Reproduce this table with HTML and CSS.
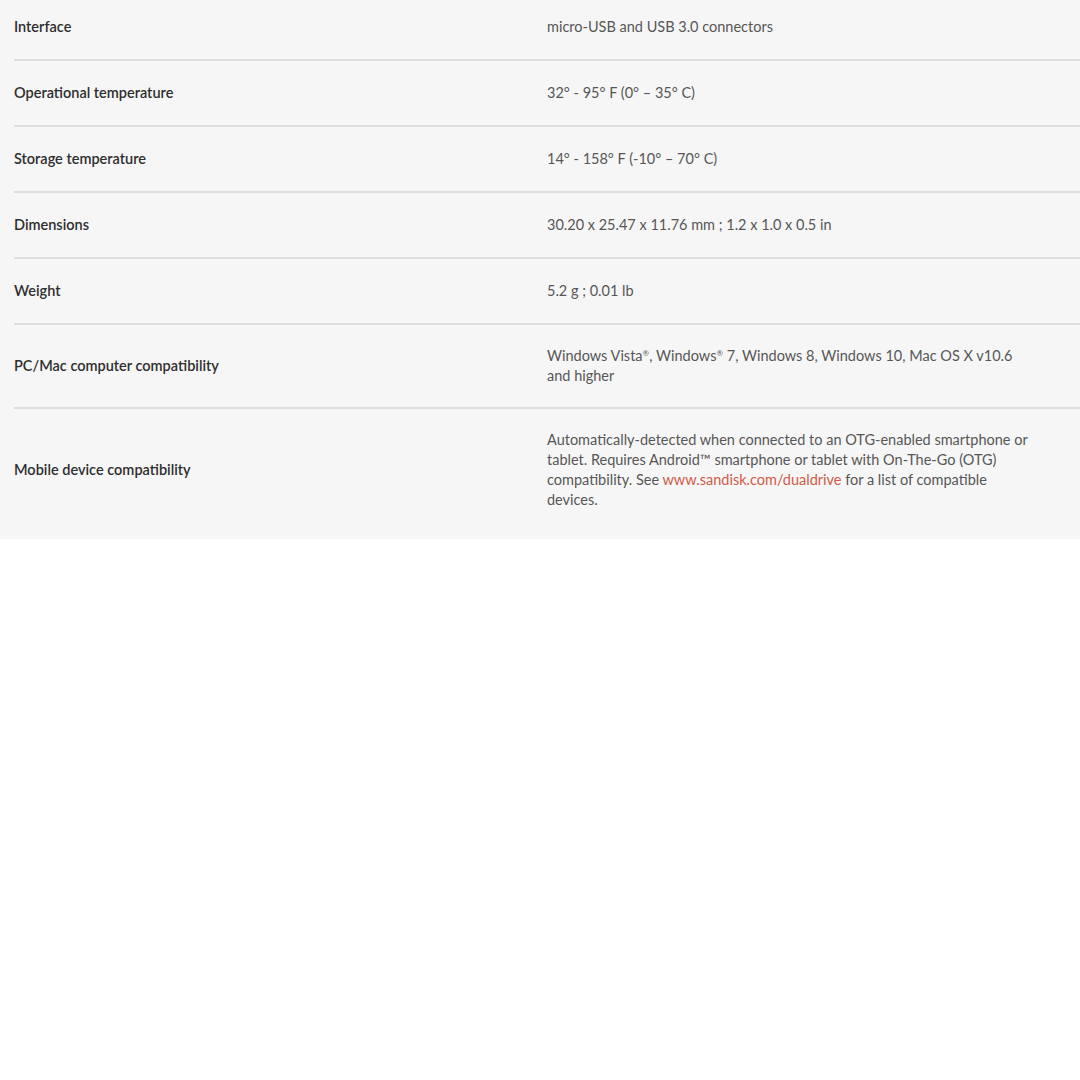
FILE: index.html
```html
<!DOCTYPE html>
<html lang="en">
<head>
<meta charset="utf-8">
<title>Specifications</title>
<link rel="stylesheet" href="styles.css">
</head>
<body>
<section class="specs">
  <div class="spec-row">
    <div class="spec-label">Interface</div>
    <div class="spec-value">micro-USB and USB 3.0 connectors</div>
  </div>
  <div class="spec-row">
    <div class="spec-label">Operational temperature</div>
    <div class="spec-value">32° - 95° F (0° – 35° C)</div>
  </div>
  <div class="spec-row">
    <div class="spec-label">Storage temperature</div>
    <div class="spec-value">14° - 158° F (-10° – 70° C)</div>
  </div>
  <div class="spec-row">
    <div class="spec-label">Dimensions</div>
    <div class="spec-value">30.20 x 25.47 x 11.76 mm ; 1.2 x 1.0 x 0.5 in</div>
  </div>
  <div class="spec-row">
    <div class="spec-label">Weight</div>
    <div class="spec-value">5.2 g ; 0.01 lb</div>
  </div>
  <div class="spec-row">
    <div class="spec-label">PC/Mac computer compatibility</div>
    <div class="spec-value">Windows Vista<sup>®</sup>, Windows<sup>®</sup> 7, Windows 8, Windows 10, Mac OS X v10.6 and higher</div>
  </div>
  <div class="spec-row">
    <div class="spec-label">Mobile device compatibility</div>
    <div class="spec-value">Automatically-detected when connected to an OTG-enabled smartphone or tablet. Requires Android™ smartphone or tablet with On-The-Go (OTG) compatibility. See <a class="spec-link" href="#">www.sandisk.com/dualdrive</a> for a list of compatible devices.</div>
  </div>
</section>
</body>
</html>
```
FILE: styles.css
```css
html, body {
  margin: 0;
  padding: 0;
  background: #ffffff;
}

body {
  font-family: Lato, "Open Sans", Arial, sans-serif;
}

.specs {
  background: #f6f6f6;
  padding: 0 0 8px 14px;
}

.spec-row {
  display: grid;
  grid-template-columns: 533px 490px;
  align-items: center;
  padding: 21px 0;
  border-bottom: 2px solid #dedede;
}

.spec-row:first-child {
  padding-top: 16px;
}

.spec-row:last-child {
  border-bottom: none;
}

.spec-label {
  font-size: 14.5px;
  font-weight: 600;
  line-height: 22px;
  color: #2e2e2e;
}

.spec-value {
  font-size: 14.5px;
  line-height: 20px;
  color: #575757;
}

.spec-value sup {
  font-size: 8px;
  line-height: 0;
  vertical-align: 5px;
}

.spec-link {
  color: #d25a47;
  text-decoration: none;
}
```
